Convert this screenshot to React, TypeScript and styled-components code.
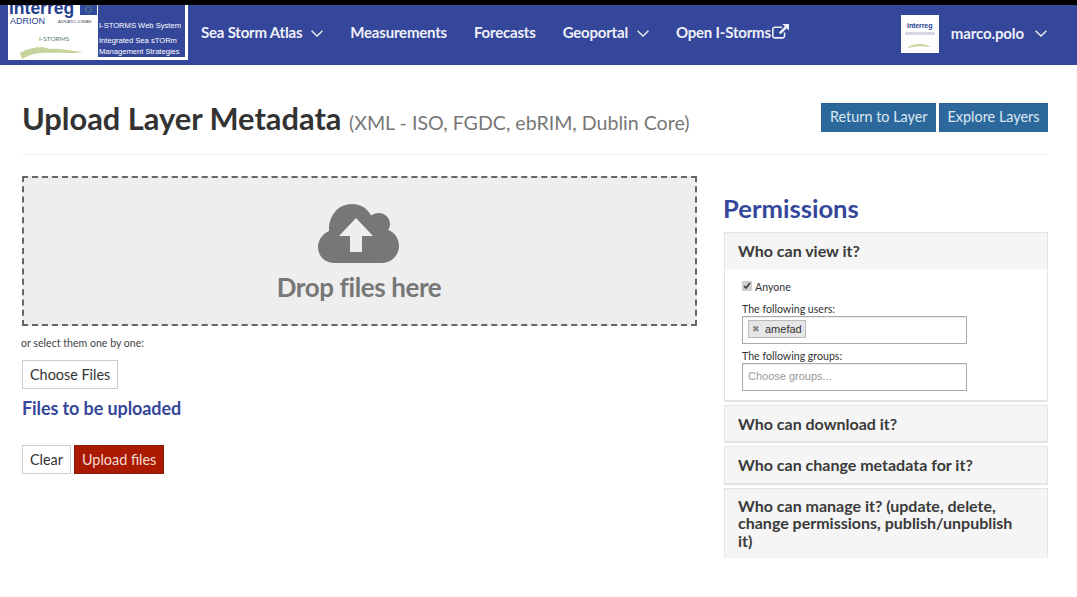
import React from 'react'
import styled, {createGlobalStyle} from 'styled-components'

const NAVY = '#35479b'

const GlobalStyle = createGlobalStyle`
  html, body {
    margin: 0;
    padding: 0;
    background: #fff;
    font-family: Lato, "Open Sans", sans-serif;
    color: #333;
    overflow: hidden;
  }
  * {
    box-sizing: border-box;
  }
`

const Chevron: React.FC = () => (
  <StyledChevron viewBox="0 0 12 7" fill="none" stroke="currentColor" strokeWidth="1.4">
    <path d="M0.6 0.8 L6 6 L11.4 0.8" />
  </StyledChevron>
)

const ExternalIcon: React.FC = () => (
  <StyledExternal viewBox="0 0 17 15" fill="currentColor">
    <path d="M3 2.4h7v1.5H3c-.8 0-1.4.6-1.4 1.4v6.4c0 .8.6 1.4 1.4 1.4h7.4c.8 0 1.4-.6 1.4-1.4V8.6h1.5v3.1c0 1.7-1.3 3-2.9 3H3c-1.6 0-3-1.3-3-3V5.3c0-1.6 1.4-2.9 3-2.9z" />
    <path d="M10.4 0H17v6.6l-2.3-2.3-6 6-1.9-1.9 6-6z" />
  </StyledExternal>
)

const CloudUpload: React.FC = () => (
  <StyledCloud viewBox="0 0 82 60">
    <path
      fill="#777"
      fillRule="evenodd"
      d="M16 59 C7 59 0 52 0 43 C0 36 4.5 30 11 27 C10.5 12 20 0 34 0 C43 0 50 5 53 11.5 C55 10 58 9 61 9 C67 9 72 14 72 20 C72 22 71.5 24.5 70 26 C77 28.5 81 35 81 42 C81 51.5 73 59 64 59 Z M38 14 L21 32 H32 V48 H44 V32 H55 Z"
    />
  </StyledCloud>
)

const InterregLogo: React.FC = () => (
  <LogoArt viewBox="0 0 90 55">
    <rect width="90" height="55" fill="#fff" />
    <rect x="72" y="-1" width="17" height="11" fill="#2f4b9c" />
    <circle cx="80.5" cy="4.5" r="3" fill="none" stroke="#d9c65a" strokeWidth="0.7" strokeDasharray="1 1" />
    <path d="M12 48 C20 43 32 40 42 44 C52 43 62 46 75 47 C62 49 52 47 42 48 C32 47 22 49 14 54 Z" fill="#c5d49b" />
  </LogoArt>
)

const App: React.FC = () => {
  return (
    <>
      <GlobalStyle />
      <TopStrip />
      <Navbar>
        <Brand>
          <BrandImage>
            <InterregLogo />
            <BrandWord>Interreg</BrandWord>
            <BrandAdrion>ADRION</BrandAdrion>
            <BrandIonian>ADRIATIC-IONIAN</BrandIonian>
            <BrandStorms>I-STORMS</BrandStorms>
          </BrandImage>
          <BrandSide>
            <BrandLine $top={16}>I-STORMS Web System</BrandLine>
            <BrandLine $top={6}>Integrated Sea sTORm</BrandLine>
            <BrandLine $top={2}>Management Strategies</BrandLine>
          </BrandSide>
        </Brand>
        <NavList>
          <NavItem>Sea Storm Atlas<Chevron /></NavItem>
          <NavItem>Measurements</NavItem>
          <NavItem>Forecasts</NavItem>
          <NavItem>Geoportal<Chevron /></NavItem>
          <NavItem>Open I-Storms<ExternalIcon /></NavItem>
        </NavList>
        <UserMenu>
          <Avatar>
            <AvatarWord>interreg</AvatarWord>
            <AvatarLine />
            <AvatarLeaf viewBox="0 0 30 8">
              <path d="M3 6 C10 2 18 2 27 6 C18 5 10 5 3 7 Z" fill="#c5d49b" />
            </AvatarLeaf>
          </Avatar>
          <UserName>marco.polo</UserName>
          <Chevron />
        </UserMenu>
      </Navbar>

      <Page>
        <PageHeader>
          <Title>
            Upload Layer Metadata <small>(XML - ISO, FGDC, ebRIM, Dublin Core)</small>
          </Title>
          <HeaderActions>
            <PrimaryButton>Return to Layer</PrimaryButton>
            <PrimaryButton>Explore Layers</PrimaryButton>
          </HeaderActions>
        </PageHeader>

        <Columns>
          <LeftColumn>
            <DropZone>
              <CloudUpload />
              <DropText>Drop files here</DropText>
            </DropZone>
            <SelectHint>or select them one by one:</SelectHint>
            <PlainButton>Choose Files</PlainButton>
            <FilesTitle>Files to be uploaded</FilesTitle>
            <FormActions>
              <PlainButton>Clear</PlainButton>
              <DangerButton>Upload files</DangerButton>
            </FormActions>
          </LeftColumn>

          <RightColumn>
            <PermissionsTitle>Permissions</PermissionsTitle>
            <AccordionPanel>
              <AccordionHead>Who can view it?</AccordionHead>
              <AccordionBody>
                <CheckRow>
                  <CheckBox type="checkbox" defaultChecked />
                  Anyone
                </CheckRow>
                <FieldLabel>The following users:</FieldLabel>
                <TokenInput>
                  <Token><TokenClose>✖</TokenClose>amefad</Token>
                </TokenInput>
                <GroupLabel>The following groups:</GroupLabel>
                <TokenInput>
                  <Placeholder>Choose groups...</Placeholder>
                </TokenInput>
              </AccordionBody>
            </AccordionPanel>
            <AccordionPanel>
              <AccordionHead>Who can download it?</AccordionHead>
            </AccordionPanel>
            <AccordionPanel>
              <AccordionHead>Who can change metadata for it?</AccordionHead>
            </AccordionPanel>
            <LastPanel>
              <WideHead>Who can manage it? (update, delete, change permissions, publish/unpublish it)</WideHead>
            </LastPanel>
          </RightColumn>
        </Columns>
      </Page>
    </>
  )
}

const TopStrip = styled.div`
  height: 5px;
  background: #000;
`

const Navbar = styled.nav`
  display: flex;
  align-items: flex-start;
  height: 60px;
  padding-left: 8px;
  background: ${NAVY};
`

const Brand = styled.div`
  display: flex;
  width: 180px;
  height: 55px;
  overflow: hidden;
  border-right: 3px solid #fff;
  background: ${NAVY};
`

const BrandImage = styled.div`
  position: relative;
  width: 90px;
  height: 55px;
  overflow: hidden;
  background: #fff;
`

const LogoArt = styled.svg`
  display: block;
  width: 90px;
  height: 55px;
`

const BrandWord = styled.span`
  position: absolute;
  left: 1px;
  top: -4px;
  font-family: "Liberation Sans", sans-serif;
  font-size: 17.5px;
  line-height: 14px;
  font-weight: 700;
  color: #24408e;
`

const BrandAdrion = styled.span`
  position: absolute;
  left: 2px;
  top: 11px;
  font-family: "Liberation Sans", sans-serif;
  font-size: 9px;
  line-height: 10px;
  color: #24408e;
`

const BrandIonian = styled.span`
  position: absolute;
  left: 50px;
  top: 14px;
  font-family: "Liberation Sans", sans-serif;
  font-size: 4px;
  color: #445;
`

const BrandStorms = styled.span`
  position: absolute;
  left: 31px;
  top: 30px;
  font-size: 6.5px;
  color: #5c7a66;
`

const BrandSide = styled.div`
  display: flex;
  flex-direction: column;
  flex: 1;
  padding-left: 1px;
  overflow: hidden;
  border-bottom: 3px solid #fff;
`

const BrandLine = styled.span<{$top: number}>`
  margin-top: ${(props) => props.$top}px;
  font-family: "Liberation Sans", sans-serif;
  font-size: 7.6px;
  line-height: 9px;
  white-space: nowrap;
  color: #fff;
`

const NavList = styled.div`
  display: flex;
  align-items: center;
  gap: 27px;
  height: 54px;
  margin-left: 13px;
`

const NavItem = styled.a`
  display: flex;
  align-items: center;
  font-size: 15px;
  font-weight: 700;
  letter-spacing: -0.2px;
  color: #eef0f7;
  white-space: nowrap;
`

const StyledChevron = styled.svg`
  width: 12px;
  height: 7px;
  margin-left: 9px;
  margin-top: 2px;
`

const StyledExternal = styled.svg`
  width: 17px;
  height: 15px;
  margin-left: 1px;
  margin-top: -1px;
`

const UserMenu = styled.div`
  display: flex;
  align-items: center;
  height: 55px;
  margin-left: auto;
  padding-right: 30px;
  font-size: 15px;
  font-weight: 700;
  letter-spacing: -0.1px;
  color: #eef0f7;
`

const Avatar = styled.div`
  display: flex;
  flex-direction: column;
  align-items: center;
  width: 38px;
  height: 38px;
  margin-top: 3px;
  padding-top: 7px;
  overflow: hidden;
  background: #fff;
`

const AvatarWord = styled.span`
  font-family: "Liberation Sans", sans-serif;
  font-size: 7px;
  line-height: 8px;
  font-weight: 700;
  color: #24408e;
`

const AvatarLine = styled.div`
  width: 30px;
  height: 3px;
  margin-top: 2px;
  background: #d5d9e6;
`

const AvatarLeaf = styled.svg`
  width: 30px;
  height: 8px;
  margin-top: 6px;
`

const UserName = styled.span`
  margin-left: 12px;
  margin-right: 2px;
`

const Page = styled.main`
  padding: 38px 29px 0 22px;
`

const PageHeader = styled.header`
  display: flex;
  align-items: flex-start;
  justify-content: space-between;
  height: 52px;
  border-bottom: 1px solid #eee;
`

const Title = styled.h1`
  margin: -2px 0 0;
  font-size: 30.8px;
  line-height: 36px;
  font-weight: 700;
  color: #333;

  small {
    font-size: 19.6px;
    font-weight: 400;
    color: #777;
  }
`

const HeaderActions = styled.div`
  display: flex;
  gap: 3px;
`

const ButtonBase = styled.button`
  height: 29px;
  padding: 0 7px;
  font-family: inherit;
  font-size: 14.4px;
  line-height: 20px;
  border-radius: 0;
`

const PrimaryButton = styled(ButtonBase)`
  padding: 0 7.5px 2px;
  color: #dde8f2;
  background: #2c689c;
  border: 1px solid #2a6496;
`

const PlainButton = styled(ButtonBase)`
  color: #333;
  background: #fff;
  border: 1px solid #ccc;
`

const DangerButton = styled(ButtonBase)`
  color: #f4dcd6;
  background: #a91a00;
  border: 1px solid #8e1a06;
`

const Columns = styled.div`
  display: grid;
  grid-template-columns: 675px 324px;
  column-gap: 27px;
  padding-top: 21px;
`

const LeftColumn = styled.section`
  display: flex;
  flex-direction: column;
  align-items: flex-start;
`

const DropZone = styled.div`
  display: flex;
  flex-direction: column;
  align-items: center;
  width: 100%;
  height: 150px;
  padding-top: 26px;
  background: #eee;
  border: 2px dashed #666;
`

const StyledCloud = styled.svg`
  width: 82px;
  height: 60px;
  margin-left: -2px;
`

const DropText = styled.div`
  margin-top: 7px;
  margin-left: -1px;
  font-size: 26px;
  line-height: 32px;
  font-weight: 700;
  letter-spacing: -0.4px;
  color: #777;
`

const SelectHint = styled.div`
  margin: 10px 0 10px -1px;
  font-size: 10.6px;
  line-height: 14px;
  color: #444;
`

const FilesTitle = styled.h3`
  margin: 9px 0 0;
  font-size: 18px;
  line-height: 20px;
  font-weight: 700;
  letter-spacing: -0.1px;
  color: ${NAVY};
`

const FormActions = styled.div`
  display: flex;
  gap: 3px;
  margin-top: 27px;
`

const RightColumn = styled.aside`
  display: flex;
  flex-direction: column;
`

const PermissionsTitle = styled.h2`
  margin: 17px 0 9px -1px;
  font-size: 25.6px;
  line-height: 30px;
  font-weight: 700;
  color: ${NAVY};
`

const AccordionPanel = styled.div`
  margin-bottom: 3px;
  border: 1px solid #e3e3e3;
  border-bottom-width: 2px;
`

const LastPanel = styled(AccordionPanel)`
  margin: 0;
  border-bottom: 0;
`

const AccordionHead = styled.h4`
  margin: 0;
  padding: 9px 13px;
  font-size: 16px;
  line-height: 17.6px;
  font-weight: 700;
  color: #3a3a3a;
  background: #f5f5f5;
`

const WideHead = styled(AccordionHead)`
  padding: 8px 30px 8px 13px;
`

const AccordionBody = styled.div`
  padding: 12px 17px 9px;
  margin-top: -1px;
  font-size: 10.6px;
  color: #333;
`

const CheckRow = styled.label`
  display: flex;
  align-items: center;
  height: 13px;
  margin-top: 1px;
`

const CheckBox = styled.input`
  width: 10px;
  height: 10px;
  margin: 0 3px 2px 0;
  accent-color: #cfcfcf;
`

const FieldLabel = styled.div`
  margin-top: 8px;
  font-size: 10.6px;
  line-height: 14px;
`

const GroupLabel = styled(FieldLabel)`
  margin-top: 5px;
`

const TokenInput = styled.div`
  display: flex;
  align-items: center;
  width: 225px;
  height: 28px;
  padding: 0 5px;
  background: #fff;
  border: 1px solid #aaa;
  box-shadow: inset 0 1px 1px #eee;
`

const Token = styled.span`
  display: flex;
  align-items: center;
  height: 18px;
  margin-top: -2px;
  padding: 0 3px;
  font-family: "Liberation Sans", sans-serif;
  font-size: 11px;
  background: #e6e6e6;
  border: 1px solid #bbb;
`

const TokenClose = styled.span`
  margin-right: 5px;
  font-size: 9px;
  color: #888;
`

const Placeholder = styled.span`
  margin-top: -2px;
  font-family: "Liberation Sans", sans-serif;
  font-size: 11px;
  color: #999;
`

export default App
